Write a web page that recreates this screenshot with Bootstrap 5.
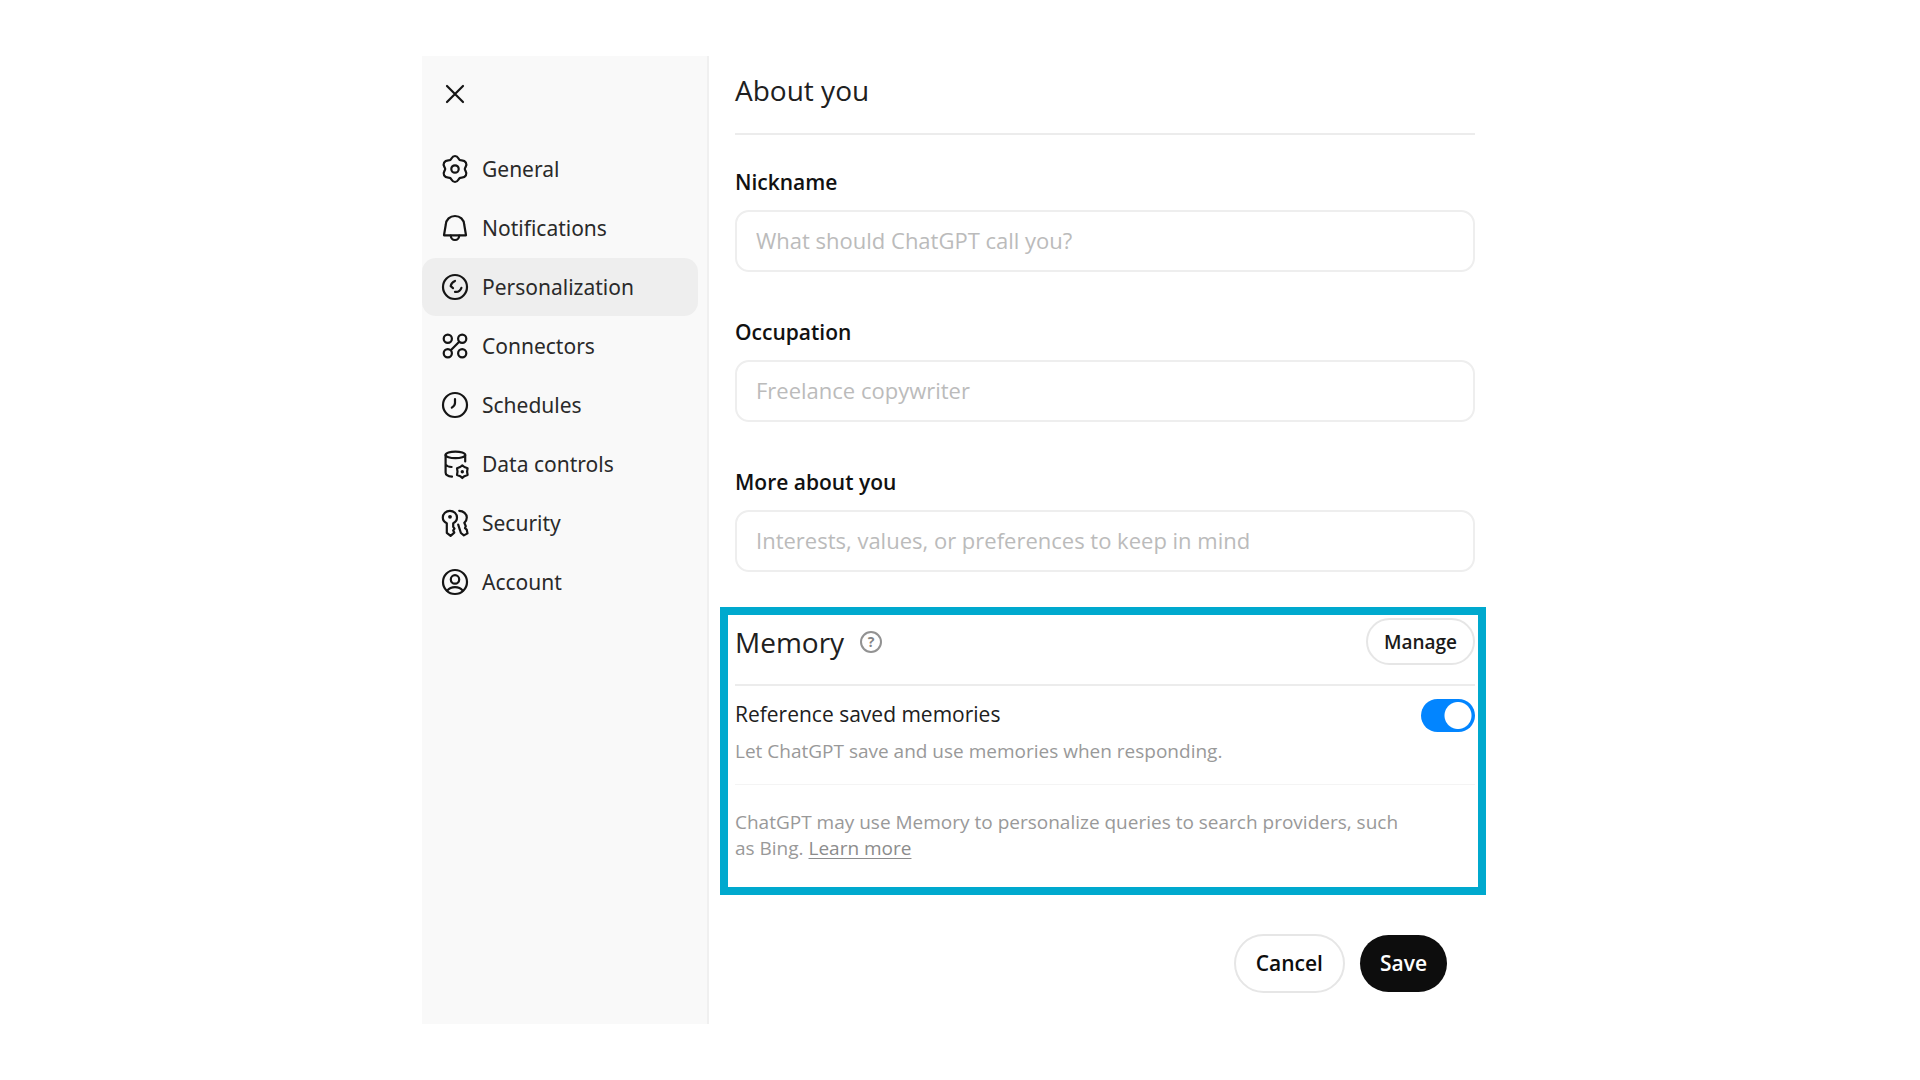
<!DOCTYPE html>
<html lang="en">
<head>
<meta charset="utf-8">
<meta name="viewport" content="width=device-width, initial-scale=1">
<title>Personalization settings</title>
<link href="https://cdn.jsdelivr.net/npm/bootstrap@5.3.0/dist/css/bootstrap.min.css" rel="stylesheet">
<style>
  body { font-family: "Open Sans", "Noto Sans", sans-serif; font-size: 21px; line-height: 30px; color: #202020; background: #fff; }
  .settings-shell { max-width: 1076px; min-height: 968px; margin: 56px auto 0; padding-right: 12px; }

  .side { flex: 0 0 287px; background: #f9f9f9; border-right: 2px solid #f0f0f0; }
  .close-btn { width: 42px; height: 42px; margin: 17px 0 25px 12px; padding: 0; color: #111; line-height: 0; }
  .side .nav { gap: 1px; padding-right: 9px; font-family: "Noto Sans", "Open Sans", sans-serif; }
  .side .nav-link { height: 58px; padding: 0 0 0 20px; gap: 14px; color: #2a2a2a; border-radius: 14px; }
  .side .nav-pills .nav-link.active { background: #eee; color: #2a2a2a; }
  .side svg { flex: none; overflow: visible; color: #151515; fill: none; stroke: currentColor; stroke-width: 2.2; stroke-linecap: round; stroke-linejoin: round; }
  .side svg .dot { fill: currentColor; stroke: none; }

  .sect-title { font-size: 28px; line-height: 40px; font-weight: 400; margin: 0; }
  .about { padding: 14px 11px 35px 26px; }
  .about-head { border-bottom: 2px solid #ececec; padding-bottom: 23px; margin-bottom: 32px; }
  .about-fields { display: flex; flex-direction: column; gap: 45px; }
  .form-label { display: block; font-weight: 600; color: #111; margin-bottom: 13px; }
  .form-control { height: 62px; border: 2px solid #eee; border-radius: 14px; padding: 0 19px 2px; font-size: 22px; }
  .form-control::placeholder { color: #bbb; opacity: 1; }

  .memory { margin-left: 11px; border: 8px solid #00a9ce; padding: 3px 3px 26px 7px; }
  .memory-head { border-bottom: 2px solid #ececec; padding-bottom: 19px; }
  .help-btn { width: 22px; height: 22px; padding: 0; margin: 0 0 0 16px; border: 2px solid #929292; border-radius: 50%; background: none; color: #858585; font-size: 14px; line-height: 18px; font-weight: 700; }
  .manage-btn { height: 47px; padding: 0 16px; border: 2px solid #e6e6e6; font-size: 19px; line-height: 26px; font-weight: 600; color: #1a1a1a; }
  .memory-row { padding: 13px 0 20px; border-bottom: 1px solid #f4f4f4; }
  .hint { font-size: 19px; line-height: 26px; color: #999; margin: 0; }
  .memory-row .hint { margin-top: 9px; }
  .memory-note { max-width: 670px; padding-top: 24px; }
  .hint a { color: #8c8c8c; text-decoration-thickness: 1px; text-underline-offset: 3px; }
  .form-check-input.toggle { width: 54px; height: 33px; margin: 0; border: 0; border-radius: 17px; background: #ccc radial-gradient(circle at 17px 50%, #fff 13px, transparent 14px); }
  .form-check-input.toggle:checked { background: #0285ff radial-gradient(circle at 37px 50%, #fff 13px, transparent 14px); }

  .actions { padding: 39px 39px 0 0; gap: 15px; }
  .actions .btn { font-size: 21px; line-height: 30px; font-weight: 600; padding: 0 20px 2px; }
  .actions .cancel-btn { height: 59px; border: 2px solid #e6e6e6; color: #0d0d0d; }
  .actions .save-btn { height: 57px; border: 0; background: #0d0d0d; color: #fff; }
</style>
</head>
<body>
<div class="settings-shell d-flex align-items-stretch">
  <aside class="side d-flex flex-column">
    <button type="button" class="btn close-btn" aria-label="Close">
      <svg width="18" height="18" viewBox="0 0 18 18"><path d="M1 1 17 17M17 1 1 17"/></svg>
    </button>
    <nav class="nav nav-pills flex-column" aria-label="Settings">
      <a class="nav-link d-flex align-items-center" href="#general">
        <svg width="26" height="26" viewBox="0 0 26 26"><path d="M13 0C16.4 0 16.24 3.1 17.8 4C19.36 4.9 22.1 3.5 23.9 6.6C25.6 9.6 22.8 11.2 22.8 13C22.8 14.8 25.6 16.4 23.9 19.4C22.1 22.5 19.36 21.1 17.8 22C16.24 22.9 16.4 26 13 26C9.6 26 9.76 22.9 8.2 22C6.64 21.1 3.9 22.5 2.1 19.4C.4 16.4 3.2 14.8 3.2 13C3.2 11.2 .4 9.6 2.1 6.6C3.9 3.5 6.64 4.9 8.2 4C9.76 3.1 9.6 0 13 0Z"/><circle cx="13" cy="13" r="3.7"/></svg>
        General</a>
      <a class="nav-link d-flex align-items-center" href="#notifications">
        <svg width="26" height="26" viewBox="0 0 26 26"><path d="M13 1C7.8 1 4.2 4.6 3.8 9.5L2 20.3H24L22.2 9.5C21.8 4.6 18.2 1 13 1Z"/><path d="M8.7 20.5C9 23.3 10.8 25 13 25s4-1.7 4.3-4.5"/></svg>
        Notifications</a>
      <a class="nav-link active d-flex align-items-center" href="#personalization" aria-current="page">
        <svg width="26" height="26" viewBox="0 0 26 26"><circle cx="13" cy="13" r="12"/><path d="M13 7C10.7 7.9 9 9.8 8.7 12.2L11 14.2M13 17.8C15.8 18.2 18.4 16.6 19.4 13.8"/></svg>
        Personalization</a>
      <a class="nav-link d-flex align-items-center" href="#connectors">
        <svg width="26" height="26" viewBox="0 0 26 26"><circle cx="5.8" cy="5.8" r="4.1"/><circle cx="20.2" cy="5.8" r="4.1"/><circle cx="5.8" cy="20.2" r="4.1"/><circle cx="20.2" cy="20.2" r="4.1"/><path d="M8.8 17.2 17.2 8.8"/></svg>
        Connectors</a>
      <a class="nav-link d-flex align-items-center" href="#schedules">
        <svg width="26" height="26" viewBox="0 0 26 26"><circle cx="13" cy="13" r="12"/><path d="M13 7V11C13 13 12 14.2 9.8 15.6"/></svg>
        Schedules</a>
      <a class="nav-link d-flex align-items-center" href="#data-controls">
        <svg width="26" height="26" viewBox="0 0 26 26"><ellipse cx="13.4" cy="3.9" rx="9.8" ry="3.3"/><path d="M23.2 4V10.5M3.6 4V21.5C3.6 24 6 25.3 10 25.6M3.6 13.5C4.6 15 6.6 15.8 9.6 16"/><path d="M20.3 14.4 22.4 16 25.6 17.2 25.1 20.6 25.6 24 22.4 25.2 20.3 27 18.2 25.2 15 24 15.5 20.6 15 17.2 18.2 16Z"/><circle class="dot" cx="20.3" cy="20.7" r="1.7"/></svg>
        Data controls</a>
      <a class="nav-link d-flex align-items-center" href="#security">
        <svg width="26" height="26" viewBox="0 0 26 26"><path d="M4.8 13.3C2.2 12.2.8 10 .8 7.6.8 3.8 4 .8 7.9.8S15 3.8 15 7.6C15 10 13.6 12.2 11.2 13.3V16.8L12.5 18.6 11.2 20.4 12.3 22.6 8.6 25.8 4.8 22.8Z"/><path d="M17.2.8C21.4.9 24.8 3.8 24.8 7.6 24.8 9.8 23.9 11.4 22.3 12.8L23.8 16.2 23 18.2 24.7 19.6 25.5 23.4 21.9 25.4 18.9 23 16.2 14.6"/><circle class="dot" cx="8" cy="6.8" r="1.9"/></svg>
        Security</a>
      <a class="nav-link d-flex align-items-center" href="#account">
        <svg width="26" height="26" viewBox="0 0 26 26"><circle cx="13" cy="13" r="12"/><circle cx="13" cy="10.4" r="4.2"/><path d="M5.2 21.6C7 19.4 9.8 18.2 13 18.2S19 19.4 20.8 21.6"/></svg>
        Account</a>
    </nav>
  </aside>

  <main class="flex-grow-1">
    <section class="about">
      <div class="about-head"><h2 class="sect-title">About you</h2></div>
      <div class="about-fields">
        <div>
          <label class="form-label" for="nickname">Nickname</label>
          <input class="form-control" id="nickname" type="text" placeholder="What should ChatGPT call you?">
        </div>
        <div>
          <label class="form-label" for="occupation">Occupation</label>
          <input class="form-control" id="occupation" type="text" placeholder="Freelance copywriter">
        </div>
        <div>
          <label class="form-label" for="more">More about you</label>
          <input class="form-control" id="more" type="text" placeholder="Interests, values, or preferences to keep in mind">
        </div>
      </div>
    </section>

    <section class="memory">
      <div class="memory-head d-flex align-items-center">
        <h2 class="sect-title">Memory</h2>
        <button type="button" class="help-btn" aria-label="About memory">?</button>
        <button type="button" class="btn manage-btn rounded-pill ms-auto">Manage</button>
      </div>
      <div class="memory-row d-flex justify-content-between align-items-start">
        <div>
          <label class="d-block" for="saved">Reference saved memories</label>
          <p class="hint">Let ChatGPT save and use memories when responding.</p>
        </div>
        <input class="form-check-input toggle" type="checkbox" role="switch" id="saved" checked>
      </div>
      <p class="hint memory-note">ChatGPT may use Memory to personalize queries to search providers, such as Bing. <a href="#learn">Learn more</a></p>
    </section>

    <div class="actions d-flex justify-content-end align-items-center">
      <button type="button" class="btn cancel-btn rounded-pill">Cancel</button>
      <button type="submit" class="btn save-btn rounded-pill">Save</button>
    </div>
  </main>
</div>
</body>
</html>
